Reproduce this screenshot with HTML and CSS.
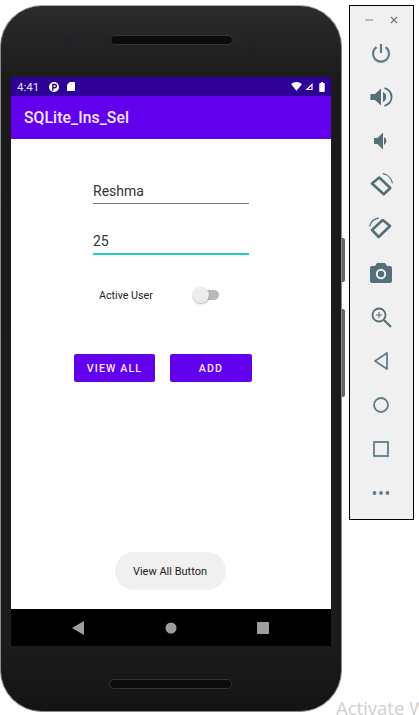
FILE: index.html
```html
<!DOCTYPE html>
<html>
<head>
<meta charset="utf-8">
<title>SQLite_Ins_Sel</title>
<link rel="stylesheet" href="styles.css">
</head>
<body>

<div class="phone">
    <div class="earpiece-row">
        <span class="camera"></span>
        <span class="speaker"></span>
    </div>

    <div class="screen">
        <div class="status-bar">
            <span class="clock">4:41</span>
            <svg class="status-app" width="10" height="10" viewBox="0 0 10 10">
                <circle cx="5" cy="5" r="5" fill="#fff"/>
                <path d="M3.800 8.500V2.500h2a1.500 1.500 0 0 1 0 3.200H3.800" fill="none" stroke="#2e0098" stroke-width="1.400"/>
            </svg>
            <svg class="status-sd" width="8" height="9" viewBox="0 0 9 10">
                <path d="M3 0h5a1 1 0 0 1 1 1v8a1 1 0 0 1-1 1H1a1 1 0 0 1-1-1V3z" fill="#fff"/>
            </svg>
            <span class="status-spacer"></span>
            <svg class="status-wifi" width="11" height="9" viewBox="0 0 12 10">
                <path d="M0 2.400C3.400-.8 8.600-.8 12 2.400L6 9.600z" fill="#fff"/>
            </svg>
            <svg class="status-signal" width="8" height="9" viewBox="0 0 10 10">
                <path d="M9.500.5v9H.5zM8 4 4.200 8H8z" fill="#fff" fill-rule="evenodd"/>
            </svg>
            <svg width="6" height="10" viewBox="0 0 6 11">
                <path d="M2 0h2v1h1a1 1 0 0 1 1 1v8a1 1 0 0 1-1 1H1a1 1 0 0 1-1-1V2a1 1 0 0 1 1-1h1z" fill="#fff"/>
            </svg>
        </div>

        <div class="app-bar">SQLite_Ins_Sel</div>

        <div class="content">
            <div class="field">Reshma</div>
            <div class="field field-focused">25</div>

            <div class="switch-row">
                <span class="switch-label">Active User</span>
                <span class="switch">
                    <span class="switch-track"></span>
                    <span class="switch-thumb"></span>
                </span>
            </div>

            <div class="button-row">
                <div class="btn btn-view">VIEW ALL</div>
                <div class="btn btn-add">ADD</div>
            </div>

            <div class="toast-spacer"></div>
            <div class="toast">View All Button</div>
        </div>

        <div class="nav-bar">
            <svg width="12" height="14" viewBox="0 0 12 14"><path d="M12 0v14L0 7z" fill="#9e9e9e"/></svg>
            <svg width="12" height="12" viewBox="0 0 12 12"><circle cx="6" cy="6" r="5.500" fill="#9e9e9e"/></svg>
            <svg width="12" height="12" viewBox="0 0 12 12"><rect width="12" height="12" rx="1" fill="#9e9e9e"/></svg>
        </div>
    </div>

    <div class="speaker-row">
        <span class="speaker"></span>
    </div>
</div>

<div class="side-keys">
    <span class="side-key side-key-power"></span>
    <span class="side-key side-key-volume"></span>
</div>

<div class="tool-bar">
    <div class="window-controls">
        <svg width="8" height="8" viewBox="0 0 8 8"><path d="M0 4h8" stroke="#8d9ca3" stroke-width="1.200"/></svg>
        <svg width="8" height="8" viewBox="0 0 8 8"><path d="M1 1l6 6M7 1L1 7" stroke="#5f7680" stroke-width="1.100"/></svg>
    </div>

    <!-- power -->
    <div class="tool"><svg width="24" height="24" viewBox="0 0 24 24"><path d="M12 3v9M7.500 6.100a8 8 0 1 0 9 0" fill="none" stroke="#607d8b" stroke-width="2.200"/></svg></div>
    <!-- volume up -->
    <div class="tool"><svg width="24" height="24" viewBox="0 0 24 24"><path d="M1.500 9v6h4.500l6 5.500V3.500L6 9z" fill="#546e7a"/><path d="M14 7a5.500 5.500 0 0 1 0 10z" fill="#546e7a"/><path d="M15.500 3.200a9 9 0 0 1 0 17.600" fill="none" stroke="#546e7a" stroke-width="1.800"/></svg></div>
    <!-- volume down -->
    <div class="tool"><svg width="24" height="24" viewBox="0 0 24 24"><path d="M5 9v6h3.500l5.500 5.500V3.500L8.500 9z" fill="#546e7a"/><path d="M15 8a4.500 4.500 0 0 1 0 8z" fill="#546e7a"/></svg></div>
    <!-- rotate left -->
    <div class="tool"><svg width="24" height="24" viewBox="0 0 24 24"><path d="M3 10.500 10.300 4.500 21.300 15 14.700 21.300z" fill="none" stroke="#546e7a" stroke-width="2.600" stroke-linejoin="round"/><path d="M13.700.5A12 12 0 0 1 23.500 10.300" fill="none" stroke="#607d8b" stroke-width="1.300"/></svg></div>
    <!-- rotate right -->
    <div class="tool"><svg width="24" height="24" viewBox="0 0 24 24"><path d="M13.700 3 21 9 9.700 20 3 13z" fill="none" stroke="#546e7a" stroke-width="2.600" stroke-linejoin="round"/><path d="M.5 9.500A12 12 0 0 1 9.700 1" fill="none" stroke="#607d8b" stroke-width="1.300"/></svg></div>
    <!-- camera -->
    <div class="tool"><svg width="24" height="24" viewBox="0 0 24 24"><path d="M8 2h8l2 3h3a2 2 0 0 1 2 2v13a2 2 0 0 1-2 2H3a2 2 0 0 1-2-2V7a2 2 0 0 1 2-2h3z" fill="#546e7a"/><circle cx="12" cy="13" r="4.200" fill="none" stroke="#f0f0f0" stroke-width="2"/></svg></div>
    <!-- zoom -->
    <div class="tool"><svg width="24" height="24" viewBox="0 0 24 24"><circle cx="10" cy="10" r="6.500" fill="none" stroke="#546e7a" stroke-width="1.800"/><path d="M15 15l7 7" stroke="#546e7a" stroke-width="2.200"/><path d="M10 7v6M7 10h6" stroke="#546e7a" stroke-width="1.100"/></svg></div>
    <!-- back -->
    <div class="tool"><svg width="24" height="24" viewBox="0 0 24 24"><path d="M18 4v16L6 12z" fill="none" stroke="#607d8b" stroke-width="1.800" stroke-linejoin="round"/></svg></div>
    <!-- home -->
    <div class="tool"><svg width="24" height="24" viewBox="0 0 24 24"><circle cx="12" cy="12" r="7" fill="none" stroke="#607d8b" stroke-width="1.800"/></svg></div>
    <!-- overview -->
    <div class="tool"><svg width="24" height="24" viewBox="0 0 24 24"><rect x="5" y="5" width="14" height="14" fill="none" stroke="#607d8b" stroke-width="1.800"/></svg></div>
    <!-- more -->
    <div class="tool"><svg width="24" height="24" viewBox="0 0 24 24"><circle cx="5.500" cy="12" r="1.900" fill="#607d8b"/><circle cx="12" cy="12" r="1.900" fill="#607d8b"/><circle cx="18.500" cy="12" r="1.900" fill="#607d8b"/></svg></div>
</div>

<div class="watermark">Activate W</div>

</body>
</html>
```

FILE: styles.css
```css
/* page */
html, body
{
    margin: 0;
    height: 715px;
    overflow: hidden;
    background-color: white;
}

body
{
    display: flex;
    align-items: flex-start;
    position: relative;
    font-family: Roboto, "Liberation Sans", sans-serif;
}

/* phone body */
.phone
{
    width: 342px;
    height: 707px;
    margin-top: 5px;
    box-sizing: border-box;
    flex: none;
    display: flex;
    flex-direction: column;
    align-items: center;
    border-radius: 42px;
    border: 1px solid #8a8a8a;
    border-top-color: #b0b0b0;
    background-color: #1b1b1b;
    background-image: linear-gradient(#2c2c2c, #1a1a1a 11%, #1c1c1c 90%, #141414);
}

.earpiece-row
{
    height: 71px;
    width: 100%;
    box-sizing: border-box;
    display: flex;
    justify-content: center;
    padding-top: 29px;
    position: relative;
}

.camera
{
    position: absolute;
    left: 63px;
    top: 30px;
    width: 8px;
    height: 8px;
    border-radius: 50%;
    background-color: #23232e;
}

.speaker
{
    width: 123px;
    height: 10px;
    box-sizing: border-box;
    border: 1px solid #333;
    border-radius: 5px;
    background-color: #0c0c0c;
}

.speaker-row
{
    flex: 1;
    display: flex;
    justify-content: center;
    padding-top: 33px;
    padding-right: 1px;
}

/* screen */
.screen
{
    width: 320px;
    height: 569px;
    display: flex;
    flex-direction: column;
    background-color: white;
}

.status-bar
{
    height: 19px;
    flex: none;
    display: flex;
    align-items: center;
    padding: 0 6px 0 6px;
    background-color: #2f0098;
    color: #e8e0f4;
    font-size: 11.500px;
}

.status-app
{
    margin-left: 10px;
}

.status-sd
{
    margin-left: 8px;
}

.status-spacer
{
    flex: 1;
}

.status-signal
{
    margin-left: 3px;
    margin-right: 6px;
}

.app-bar
{
    height: 43px;
    flex: none;
    box-sizing: border-box;
    padding-left: 13px;
    line-height: 43px;
    background-color: #6200ee;
    color: #f3e8ff;
    font-size: 15.700px;
    font-weight: 500;
    letter-spacing: 0.1px;
}

.content
{
    flex: 1;
    display: flex;
    flex-direction: column;
    align-items: center;
}

/* inputs */
.field
{
    width: 156px;
    height: 27px;
    box-sizing: border-box;
    margin-top: 38px;
    padding-top: 5px;
    line-height: 19px;
    font-size: 14px;
    color: #333;
    border-bottom: 1px solid #777;
}

.field-focused
{
    height: 28px;
    margin-top: 23px;
    border-bottom: 2px solid #22cdc6;
}

/* switch */
.switch-row
{
    width: 120px;
    margin-top: 32px;
    margin-right: 24px;
    display: flex;
    align-items: center;
    justify-content: space-between;
}

.switch-label
{
    font-size: 10.700px;
    color: #222;
}

.switch
{
    width: 26px;
    height: 16px;
    position: relative;
}

.switch-track
{
    position: absolute;
    left: 2px;
    right: 0;
    top: 3px;
    height: 10px;
    border-radius: 5px;
    background-color: #b9b9b9;
}

.switch-thumb
{
    position: absolute;
    left: 0;
    top: 0;
    width: 16px;
    height: 16px;
    border-radius: 50%;
    background-color: #ececec;
    box-shadow: 0 1px 2px rgba(0, 0, 0, 0.3);
}

/* buttons */
.button-row
{
    margin-top: 51px;
    margin-right: 16px;
    display: flex;
    gap: 15px;
}

.btn
{
    height: 28px;
    line-height: 29px;
    text-align: center;
    border-radius: 2px;
    background-color: #6200ee;
    color: #f2e9ff;
    font-size: 10.700px;
    font-weight: 500;
    letter-spacing: 1.100px;
}

.btn-view
{
    width: 81px;
}

.btn-add
{
    width: 82px;
}

/* toast */
.toast-spacer
{
    flex: 1;
}

.toast
{
    width: 111px;
    height: 38px;
    margin-right: 2px;
    margin-bottom: 19px;
    line-height: 39px;
    text-align: center;
    border-radius: 19px;
    background-color: #f0f0f0;
    color: #222;
    font-size: 11px;
}

/* nav */
.nav-bar
{
    height: 37px;
    flex: none;
    box-sizing: border-box;
    display: flex;
    align-items: center;
    justify-content: space-between;
    padding: 0 62px 0 61px;
    background-color: black;
}

/* hardware keys */
.side-keys
{
    width: 3px;
    flex: none;
    display: flex;
    flex-direction: column;
    margin-top: 238px;
    gap: 27px;
}

.side-key
{
    background-color: #666;
    border-radius: 0 2px 2px 0;
}

.side-key-power
{
    height: 44px;
}

.side-key-volume
{
    height: 88px;
}

/* emulator tool bar */
.tool-bar
{
    width: 65px;
    height: 515px;
    margin-top: 5px;
    margin-left: 4px;
    flex: none;
    box-sizing: border-box;
    display: flex;
    flex-direction: column;
    align-items: center;
    border: 1px solid black;
    background-color: #f0f0f0;
}

.window-controls
{
    width: 100%;
    box-sizing: border-box;
    display: flex;
    justify-content: space-between;
    padding: 10px 15px 0 15px;
    height: 25px;
}

.tool
{
    height: 44px;
    width: 100%;
    flex: none;
    box-sizing: border-box;
    padding-right: 1px;
    display: flex;
    align-items: center;
    justify-content: center;
}

.watermark
{
    position: absolute;
    left: 336px;
    top: 695px;
    white-space: nowrap;
    font-family: "Open Sans", sans-serif;
    font-size: 18.500px;
    color: #cfcfcf;
}
```
